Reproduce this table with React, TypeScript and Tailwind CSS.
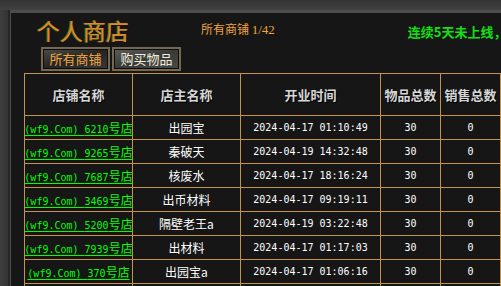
import React from "react";

type Shop = { id: string; owner: string; opened: string; items: number; sold: number };

const shops: Shop[] = [
  { id: "6210", owner: "出园宝", opened: "2024-04-17 01:10:49", items: 30, sold: 0 },
  { id: "9265", owner: "秦破天", opened: "2024-04-19 14:32:48", items: 30, sold: 0 },
  { id: "7687", owner: "核废水", opened: "2024-04-17 18:16:24", items: 30, sold: 0 },
  { id: "3469", owner: "出币材料", opened: "2024-04-17 09:19:11", items: 30, sold: 0 },
  { id: "5200", owner: "隔壁老王a", opened: "2024-04-19 03:22:48", items: 30, sold: 0 },
  { id: "7939", owner: "出材料", opened: "2024-04-17 01:17:03", items: 30, sold: 0 },
  { id: "370", owner: "出园宝a", opened: "2024-04-17 01:06:16", items: 30, sold: 0 },
];

const cols = "grid grid-cols-[108px_108px_140px_60px_60px]";
const cell = "flex items-center justify-center border-r border-b border-[#c4924a] whitespace-nowrap";
const mono = "font-['DejaVu_Sans_Mono',monospace] text-[10px]";

function Tab({ label, active }: { label: string; active?: boolean }) {
  return (
    <div className="h-[24px] w-[69px] border-2 border-[#766850] bg-[#0c0c0c] p-px">
      <div
        className={`flex h-full items-center justify-center text-[13px] ${
          active
            ? "bg-gradient-to-br from-[#4a4a48] via-[#242424] to-[#383838] text-[#f2a73c]"
            : "bg-gradient-to-br from-[#5a5c58] via-[#383a38] to-[#484a48] text-[#f3ecdc]"
        }`}
      >
        {label}
      </div>
    </div>
  );
}

export default function App() {
  return (
    <div className="flex h-[286px] w-[501px] flex-col overflow-hidden bg-[#3a3a3a] font-['Noto_Sans_CJK_SC',sans-serif]">
      <div className="h-[10px] bg-gradient-to-b from-[#343434] to-[#424242]" />
      <div className="flex min-h-0 flex-1">
        <div className="w-[8px] bg-gradient-to-r from-[#3e3e3e] to-[#333]" />
        <div className="w-[2px] bg-[#252525]" />
        <div className="flex min-w-0 flex-1 flex-col overflow-hidden border-l border-t-[3px] border-[#4c4c4c] bg-[#161616]">
          <div className="flex h-[34px] shrink-0 items-center whitespace-nowrap">
            <span className="ml-[26px] text-[23px] leading-none text-[#d98c2c] [text-shadow:-1px_0_0_#5c7a22]">
              个人商店
            </span>
            <span className="ml-[72px] text-[12px] text-[#f0a23c]">
              所有商铺 <span className="font-['Liberation_Serif',serif] text-[13px]">1/42</span>
            </span>
            <span className="ml-[133px] mt-[3px] text-[13px] font-bold text-[#12e012]">
              连续5天未上线，
            </span>
          </div>
          <div className="flex shrink-0 gap-[2px] pl-[30px]">
            <Tab label="所有商铺" active />
            <Tab label="购买物品" />
          </div>
          <div className="ml-[13px] mt-[2px] w-[477px] border-l border-t border-[#c4924a]">
            <div className={`${cols} h-[42px] text-[13px] font-bold text-[#d6d6d6] [text-shadow:1px_1px_0_#000]`}>
              <div className={cell}>店铺名称</div>
              <div className={cell}>店主名称</div>
              <div className={cell}>开业时间</div>
              <div className={cell}>物品总数</div>
              <div className={cell}>销售总数</div>
            </div>
            {shops.map((s) => (
              <div key={s.id} className={`${cols} h-[24px] text-[12px] text-white`}>
                <div className={cell}>
                  <span className="text-[#00ff00] underline decoration-[#00ff00] underline-offset-[2px]">
                    <span className={mono}>(wf9.Com) {s.id}</span>号店
                  </span>
                </div>
                <div className={cell}>{s.owner}</div>
                <div className={`${cell} ${mono}`}>{s.opened}</div>
                <div className={`${cell} ${mono}`}>{s.items}</div>
                <div className={`${cell} ${mono}`}>{s.sold}</div>
              </div>
            ))}
            <div className={`${cols} h-[24px]`}>
              <div className={cell} />
              <div className={cell} />
              <div className={cell} />
              <div className={cell} />
              <div className={cell} />
            </div>
          </div>
        </div>
      </div>
    </div>
  );
}
